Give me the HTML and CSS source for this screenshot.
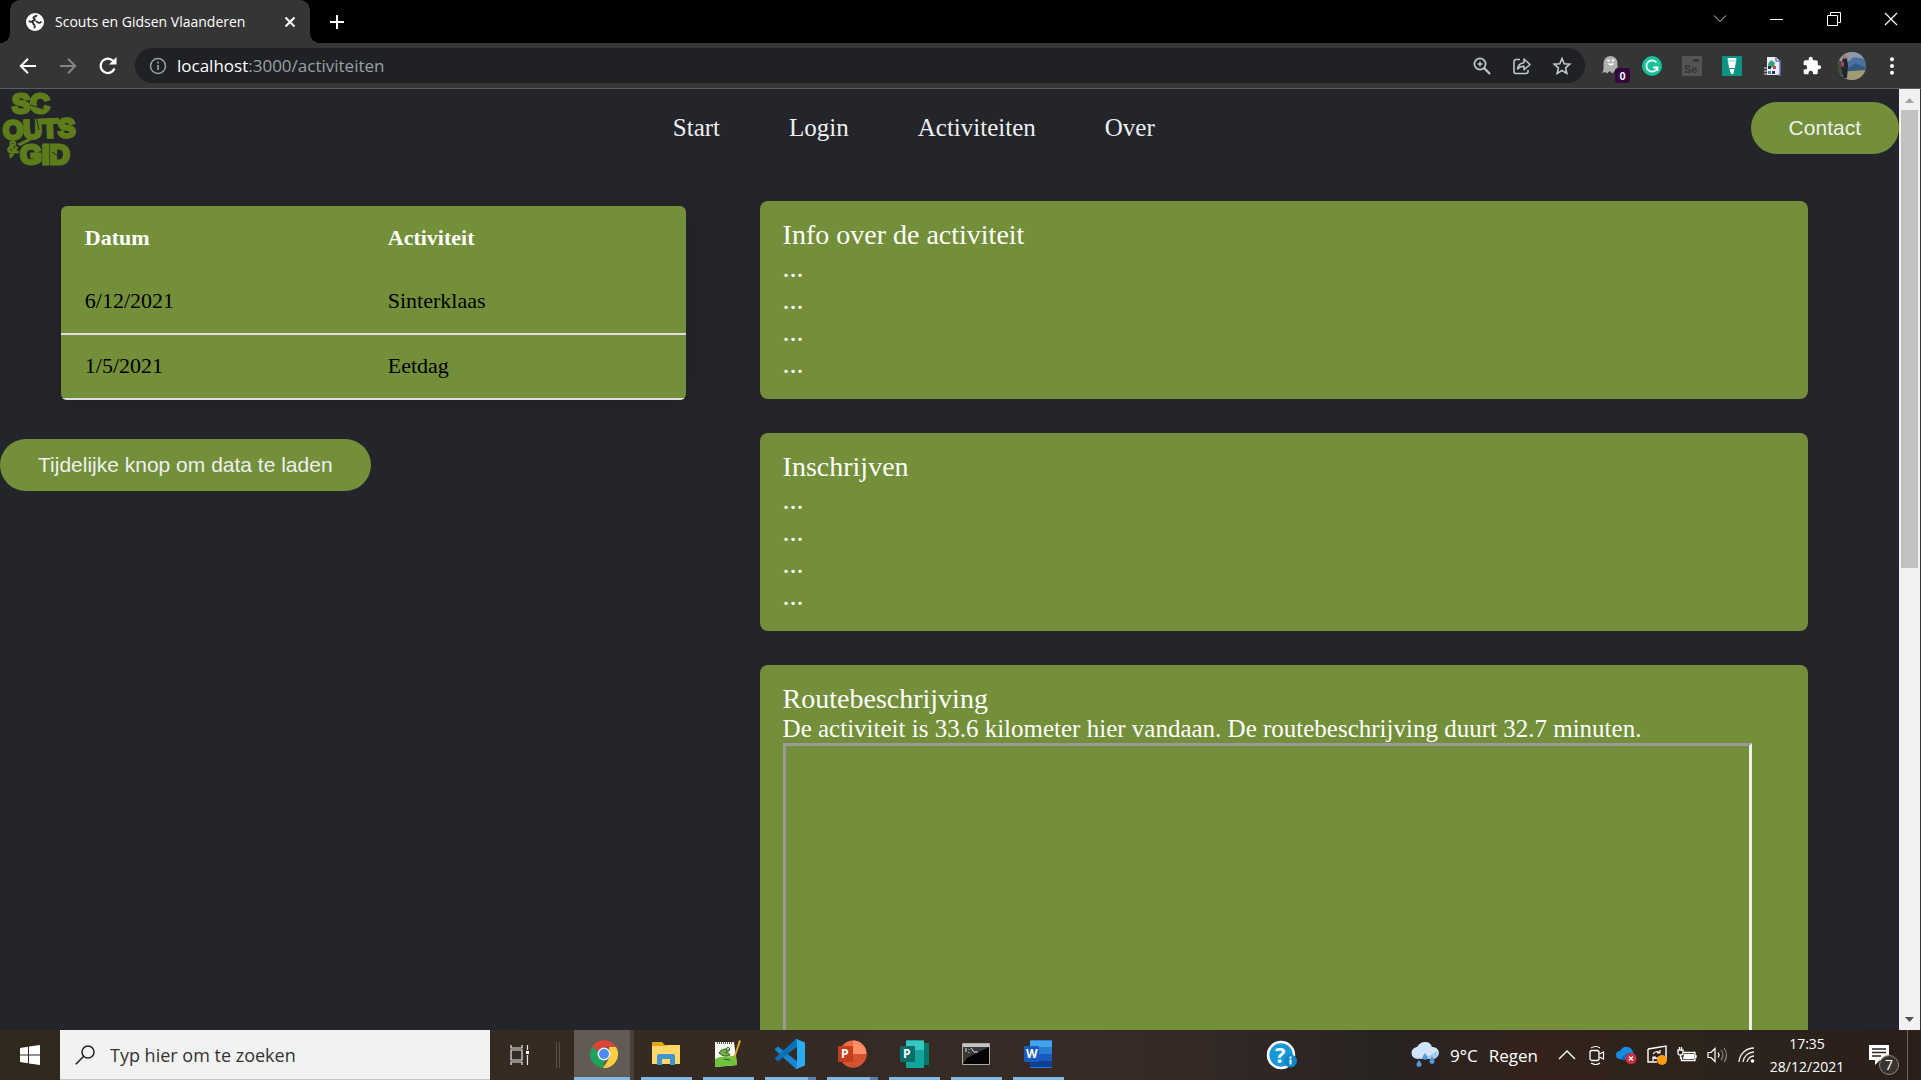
FILE: index.html
```html
<!DOCTYPE html>
<html lang="nl">
<head>
<meta charset="utf-8">
<meta name="viewport" content="width=device-width, initial-scale=1">
<title>Scouts en Gidsen Vlaanderen</title>
<link rel="stylesheet" href="styles.css">
</head>
<body>
<div class="tabstrip">
  <div class="tab">
    <svg class="favicon" viewBox="0 0 18 18" width="18" height="18"><circle cx="9" cy="9" r="9" fill="#fff"/><path d="M11 2.200c-.6 1.600-3 1-3.600 2.600-.3 1.200 1.500.8 1.600 1.800.1 1-1.600 1.400-3 1.400M2.600 8.600c2.400-.2 4.400 0 4.600 1.800.1 1.300 1.500 1 1.500 2.300l-.2 2.600M15.500 8.500c-.8 1.200-1.700 1.600-2.800 1.300-1.300-.4-1.500-1.400-3-1.400" fill="none" stroke="#353535" stroke-width="1.900"/></svg>
    <span class="tab-title">Scouts en Gidsen Vlaanderen</span>
    <button class="icon-button tab-close" aria-label="Tabblad sluiten"><svg viewBox="0 0 12 12" width="12" height="12"><path d="M1.500 1.500l9 9m0-9l-9 9" stroke="#fff" stroke-width="2"/></svg></button>
  </div>
  <button class="icon-button new-tab" aria-label="Nieuw tabblad"><svg viewBox="0 0 16 16" width="16" height="16"><path d="M8 1v14M1 8h14" stroke="#fff" stroke-width="2"/></svg></button>
  <div class="window-controls">
    <button class="icon-button" aria-label="Tabbladen zoeken"><svg viewBox="0 0 14 14" width="14" height="14"><path d="M1 3.500l6 6 6-6" fill="none" stroke="#ddd"/></svg></button>
    <button class="icon-button" aria-label="Minimaliseren"><svg viewBox="0 0 14 14" width="14" height="14"><path d="M0 7.500h13" stroke="#fff"/></svg></button>
    <button class="icon-button" aria-label="Vorig formaat"><svg viewBox="0 0 14 14" width="14" height="14"><path d="M.5 3.500h10v10H.500zM3.500 3V.500h10v10H11" fill="none" stroke="#fff"/></svg></button>
    <button class="icon-button" aria-label="Sluiten"><svg viewBox="0 0 14 14" width="14" height="14"><path d="M1 1l12 12M13 1L1 13" stroke="#fff" stroke-width="1.200"/></svg></button>
  </div>
</div>

<div class="toolbar">
  <button class="icon-button tool" aria-label="Terug"><svg viewBox="0 0 18 18" width="18" height="18"><path d="M17 9H2M9 1.800L1.800 9 9 16.200" fill="none" stroke="#fff" stroke-width="2"/></svg></button>
  <button class="icon-button tool" aria-label="Vooruit"><svg viewBox="0 0 18 18" width="18" height="18"><path d="M1 9h15M9 1.800L16.200 9 9 16.200" fill="none" stroke="#858585" stroke-width="2"/></svg></button>
  <button class="icon-button tool" aria-label="Vernieuwen"><svg viewBox="0 0 18 18" width="18" height="18"><path d="M15.500 11.500A7.200 7.200 0 1 1 14 3.800" fill="none" stroke="#fff" stroke-width="2.200"/><path d="M17.500 0v7.500H10z" fill="#fff"/></svg></button>
  <div class="omnibox">
    <svg viewBox="0 0 18 18" width="18" height="18"><circle cx="9" cy="9" r="7.500" fill="none" stroke="#9aa0a6" stroke-width="1.500"/><path d="M9 8v5M9 4.800v1.700" stroke="#9aa0a6" stroke-width="1.700"/></svg>
    <div class="address" role="textbox" aria-label="Adres"><span class="host">localhost</span>:3000/activiteiten</div>
    <button class="icon-button tool" aria-label="Zoomen"><svg viewBox="0 0 18 18" width="18" height="18"><circle cx="7" cy="7" r="5.600" fill="none" stroke="#c4c7c9" stroke-width="1.700"/><path d="M11 11l6 6" stroke="#c4c7c9" stroke-width="2.200"/><path d="M7 4.500v5M4.500 7h5" stroke="#c4c7c9" stroke-width="1.400"/></svg></button>
    <button class="icon-button tool" aria-label="Delen"><svg viewBox="0 0 18 18" width="18" height="18"><path d="M7 2.500H3a2 2 0 0 0-2 2v10a2 2 0 0 0 2 2h10a2 2 0 0 0 2-2V13" fill="none" stroke="#c4c7c9" stroke-width="1.600"/><path d="M4.500 12C5 8 7.500 6 11 5.700V2l6 5.500-6 5.200V9.200C8 9.200 6 10 4.500 12z" fill="none" stroke="#c4c7c9" stroke-width="1.500" stroke-linejoin="round"/></svg></button>
    <button class="icon-button tool" aria-label="Bladwijzer"><svg viewBox="0 0 18 18" width="18" height="18"><path d="M9 1.500l2.200 5.200 5.600.5-4.200 3.700 1.200 5.500L9 13.500l-4.800 2.900 1.200-5.500L1.200 7.200l5.600-.5z" fill="none" stroke="#c4c7c9" stroke-width="1.600"/></svg></button>
  </div>
  <div class="extensions">
    <button class="icon-button tool" aria-label="Ghostery"><svg viewBox="0 0 28 28" width="28" height="28"><path d="M4 21c2-3 1.500-6 1.500-10a7 7 0 0 1 14 0v9l-2.500-1.500-2.500 3-3-2.500-2.500 2.500-2-1.500z" fill="#b0b0b0"/><circle cx="10.500" cy="8.500" r="1.300" fill="#fff"/><circle cx="15" cy="8.500" r="1.300" fill="#fff"/><path d="M9.500 11.500h7q-3.500 4-7 0z" fill="#fff"/></svg><span class="ext-badge">0</span></button>
    <button class="icon-button tool" aria-label="Grammarly"><svg viewBox="0 0 20 20" width="20" height="20"><circle cx="10" cy="10" r="10" fill="#15c39a"/><path d="M14.500 6.500A5.600 5.600 0 1 0 15.300 12M11 11.500h4.500V15" fill="none" stroke="#fff" stroke-width="1.800"/></svg></button>
    <button class="icon-button tool" aria-label="Selenium"><svg viewBox="0 0 20 20" width="20" height="20"><path d="M0 0h20v20H0z" fill="#545454"/><path d="M11 3h6v3h-6z" fill="#383838"/><text x="2" y="17" font-family="Liberation Sans" font-weight="bold" font-size="11" fill="#353535">Se</text></svg></button>
    <button class="icon-button tool" aria-label="Markeren"><svg viewBox="0 0 20 20" width="20" height="20"><path d="M0 0h20v20H0z" fill="#0c9384"/><path d="M5.500 2h9l-1.600 10h-5.800zM7.500 13h5l-1.300 5h-2z" fill="#fff"/><path d="M5.500 5h9" stroke="#9cc"/></svg></button>
    <button class="icon-button tool" aria-label="Rapport"><svg viewBox="0 0 20 20" width="20" height="20"><path d="M5 1h9l4 4v14H5z" fill="#e9eefa"/><path d="M14 1v4h4v14h-2" fill="none" stroke="#6b78b8" stroke-width="1.500"/><path d="M6 8l3-4 4 3-1 4-5 1z" fill="#359b72"/><path d="M2 12h3M2 15h3M2 18h3" stroke="#ddd"/><path d="M6 10h3v3H6zM10 15h3v3h-3z" fill="#24345d"/><path d="M11 10h3v3h-3z" fill="#c64848"/><path d="M6 15h3v3H6z" fill="#5577bd"/></svg></button>
    <button class="icon-button tool" aria-label="Extensies"><svg viewBox="0 0 24 24" width="20" height="20"><path d="M20.500 11H19V7a2 2 0 0 0-2-2h-4V3.500a2.500 2.500 0 0 0-5 0V5H4a2 2 0 0 0-2 2v3.800h1.500a2.700 2.700 0 0 1 0 5.400H2V20a2 2 0 0 0 2 2h3.800v-1.500a2.700 2.700 0 0 1 5.400 0V22H17a2 2 0 0 0 2-2v-4h1.500a2.500 2.500 0 0 0 0-5z" fill="#fff"/></svg></button>
    <button class="icon-button tool" aria-label="Profiel"><svg viewBox="0 0 28 28" width="28" height="28"><clipPath id="avatar"><circle cx="14" cy="14" r="14"/></clipPath><g clip-path="url(#avatar)"><path d="M0 0h28v28H0z" fill="#49729c"/><path d="M0 0h28v7L16 5 8 11 0 13z" fill="#8f9aa6"/><path d="M10 16l8-5 10 5v5H10z" fill="#345a83"/><path d="M0 20l28-2v10H0z" fill="#a39a74"/><path d="M0 8l5 2v13H0z" fill="#3d4f38"/><path d="M5 6h4l1 8-1 12H5L3 13z" fill="#20242c"/><circle cx="7" cy="5" r="2" fill="#a47962"/><path d="M3 9l3 1v5l-3-1z" fill="#a5445d"/></g></svg></button>
    <button class="icon-button tool" aria-label="Menu"><svg viewBox="0 0 6 18" width="6" height="18"><g fill="#fff"><circle cx="3" cy="2.200" r="2"/><circle cx="3" cy="9" r="2"/><circle cx="3" cy="15.800" r="2"/></g></svg></button>
  </div>
</div>

<div class="viewport">
  <div class="page">
    <header class="header">
      <a href="#start" class="logo" aria-label="Scouts en Gidsen"><svg viewBox="0 0 77 78" width="77" height="78"><g font-family="Liberation Sans" font-weight="bold" fill="#5d7d1b" stroke="#5d7d1b" stroke-width="3"><text x="12" y="24" font-size="27">SC</text><text x="3" y="49" font-size="26" transform="rotate(-2 38 40)">OUTS</text><text x="20" y="75" font-size="28">GID</text><text x="7" y="64" font-size="16" stroke-width="1">&amp;</text></g><path d="M9 65l6-1-2 3-3 3zM17 55l10-5 8-1-7 4-8 4z" fill="#5d7d1b"/><path d="M30 16l14 4M36 27l3 14M52 63l8 5" stroke="#24252a"/></svg></a>
      <nav class="nav">
        <a href="#start">Start</a>
        <a href="#login">Login</a>
        <a href="#activiteiten">Activiteiten</a>
        <a href="#over">Over</a>
      </nav>
      <button class="pill">Contact</button>
    </header>
    <main class="content">
      <section class="agenda">
        <table class="activities">
          <thead><tr><th scope="col">Datum</th><th scope="col">Activiteit</th></tr></thead>
          <tbody>
            <tr><td>6/12/2021</td><td>Sinterklaas</td></tr>
            <tr><td>1/5/2021</td><td>Eetdag</td></tr>
          </tbody>
        </table>
        <button class="pill">Tijdelijke knop om data te laden</button>
      </section>
      <section class="details">
        <article class="card">
          <h2>Info over de activiteit</h2>
          <div class="lines"><p>...</p><p>...</p><p>...</p><p>...</p></div>
        </article>
        <article class="card">
          <h2>Inschrijven</h2>
          <div class="lines"><p>...</p><p>...</p><p>...</p><p>...</p></div>
        </article>
        <article class="card">
          <h2>Routebeschrijving</h2>
          <p class="route">De activiteit is 33.6 kilometer hier vandaan. De routebeschrijving duurt 32.7 minuten.</p>
          <div class="map"></div>
        </article>
      </section>
    </main>
  </div>
  <div class="scrollbar">
    <svg viewBox="0 0 21 21" width="21" height="21"><path d="M6 14l4.500-5 4.500 5z" fill="#a3a3a3"/></svg>
    <div class="track"><div class="thumb"></div></div>
    <svg viewBox="0 0 21 21" width="21" height="21"><path d="M6 8l4.500 5L15 8z" fill="#505050"/></svg>
  </div>
</div>

<footer class="taskbar">
  <button class="icon-button start" aria-label="Start"><svg viewBox="0 0 20 20" width="20" height="20"><path d="M0 3l8-1.200v7.700H0zM9 1.600L20 0v9.500H9zM0 10.500h8v7.700L0 17zM9 10.500h11V20L9 18.400z" fill="#fff"/></svg></button>
  <label class="search">
    <svg viewBox="0 0 20 20" width="20" height="20"><circle cx="13" cy="7" r="6" fill="none" stroke="#222" stroke-width="1.500"/><path d="M8.700 11.300L.8 19.200" stroke="#222" stroke-width="1.600"/></svg>
    <input type="text" placeholder="Typ hier om te zoeken" aria-label="Typ hier om te zoeken">
  </label>
  <button class="icon-button task-view" aria-label="Taakweergave"><svg viewBox="0 0 20 20" width="20" height="20"><path d="M1 5h11v10H1zM1 0v3h11V0M1 20v-3h11v3M17.500 0v5M17.500 10v10" fill="none" stroke="#e8e8e8" stroke-width="1.200"/><path d="M16 6h3v3h-3z" fill="#fff"/></svg></button>
  <div class="divider"></div>
  <div class="apps">
    <button class="app active" aria-label="Chrome"><svg viewBox="0 0 28 28" width="28" height="28"><path d="M14 14L14 28A14 14 0 0 1 1.900 7z" fill="#1da15c"/><path d="M26.100 7A14 14 0 0 1 13 28l7-11-1-10z" fill="#ffcd40"/><path d="M14 14L1.900 7A14 14 0 0 1 26.100 7H14z" fill="#db4437"/><circle cx="14" cy="14" r="6.500" fill="#f1f1f1"/><circle cx="14" cy="14" r="5" fill="#4c8bf5"/></svg></button>
    <button class="app" aria-label="Verkenner"><svg viewBox="0 0 28 28" width="28" height="28"><path d="M0 2h10l3 3h15v19H0z" fill="#e3a51a"/><path d="M0 6h14l2-1h12v19H0z" fill="#ffd867"/><path d="M5 25V16a2 2 0 0 1 2-2h14a2 2 0 0 1 2 2v9h-5v-6h-8v6z" fill="#3f94cf"/></svg></button>
    <button class="app" aria-label="Notepad++"><svg viewBox="0 0 28 28" width="28" height="28"><path d="M1 2h19l3 23-22 2z" fill="#f5f8ee"/><path d="M1 19c7-4 14-1 21-4l1 10-22 2z" fill="#70c43b"/><path d="M3 3h16" stroke="#555" stroke-dasharray="1 1" stroke-width="2"/><path d="M5 13c2-4 7-5 11-3-2 2-5 1-4 3 2-1 3 0 4 2-4 2-8 1-11-2zM10 19l6 1" fill="#70b13c" stroke="#31562a"/><circle cx="14" cy="9" r="1.500" fill="#eef5df" stroke="#31562a"/><path d="M27 1l-6 17-2 2 1-4L25 0z" fill="#d7a52b"/></svg></button>
    <button class="app split" aria-label="Visual Studio Code"><svg viewBox="0 0 30 30" width="30" height="30"><path d="M0 10l3-2.500L23 23v7h-2L0 11z" fill="#1787cf"/><path d="M0 20l3 2.500L23 7V0h-2L0 19z" fill="#0b70b8"/><path d="M21 0l8 3q1 .5 1 1.500v21q0 1-1 1.500l-8 3 1-3V3z" fill="#2bacf0"/></svg></button>
    <button class="app split" aria-label="PowerPoint"><svg viewBox="0 0 28 28" width="28" height="28"><circle cx="15" cy="14" r="13.500" fill="#ed6c47"/><path d="M15 .5A13.500 13.500 0 0 1 28.500 14H15z" fill="#ff8f6b"/><path d="M1.500 14h27A13.500 13.500 0 0 1 1.500 14z" fill="#d35230"/><rect y="6" width="15" height="16" rx="1" fill="#c43e1c"/><text x="3" y="18" font-family="Open Sans" font-weight="bold" font-size="12" fill="#fff">P</text></svg></button>
    <button class="app" aria-label="Publisher"><svg viewBox="0 0 28 28" width="28" height="28"><rect x="20" y="3" width="9" height="22" fill="#077568"/><rect x="6" width="18" height="28" rx="1" fill="#12a59b"/><path d="M6 1h18v9H6z" fill="#37c6be"/><rect y="6" width="15" height="16" rx="1" fill="#086e6c"/><text x="3" y="18" font-family="Open Sans" font-weight="bold" font-size="12" fill="#fff">P</text></svg></button>
    <button class="app" aria-label="Opdrachtprompt"><svg viewBox="0 0 28 28" width="28" height="28"><path d="M.5 3.500h27v21H.500z" fill="#050505" stroke="#aaa"/><path d="M1 4h26v3H1z" fill="#c4c4c4"/><path d="M1 7h26L5 18l-4 6z" fill="#393939"/><path d="M4 8v4M7 9v1m0 2v1M9 8l3 4h4" fill="none" stroke="#ddd"/></svg></button>
    <button class="app" aria-label="Word"><svg viewBox="0 0 28 28" width="28" height="28"><rect x="6" width="22" height="28" rx="1" fill="#2b7cd3"/><path d="M6 1h22v6H6z" fill="#41a5ee"/><path d="M6 14h22v7H6z" fill="#185abd"/><path d="M6 21h22v6H6z" fill="#103f91"/><rect y="6" width="15" height="16" rx="1" fill="#185abd"/><text x="2" y="18" font-family="Open Sans" font-weight="bold" font-size="12" fill="#fff">W</text></svg></button>
  </div>
  <button class="icon-button help" aria-label="Help"><svg viewBox="0 0 30 28" width="30" height="28"><circle cx="14" cy="14" r="13" fill="#1598d5" stroke="#fff" stroke-width="2.500"/><text x="8" y="22" font-family="Open Sans" font-weight="bold" font-size="22" fill="#fff">?</text><circle cx="23.500" cy="20" r="6.500" fill="#0e86c8"/><path d="M23.500 18.500v5M23.500 15.500v2" stroke="#fff" stroke-width="2"/></svg></button>
  <button class="weather"><svg viewBox="0 0 28 26" width="28" height="26"><path d="M7 17a6 6 0 0 1-1-12C8 2 10 0 14 0c4 0 6 2 7 5 9 0 9 11 1 12z" fill="#cfe5fa"/><path d="M4 15c7 2 14 0 22-6 1 5-1 8-4 8H7z" fill="#9ec8ee"/><path d="M8 18q5 6 0 7-5-1 0-7zM14 11q5 6 0 7-5-1 0-7zM21 14q5 7 0 8-5-1 0-8z" fill="#579bd6"/></svg><span>9°C</span><span>Regen</span></button>
  <div class="tray">
    <button class="icon-button" aria-label="Verborgen pictogrammen"><svg viewBox="0 0 18 18" width="18" height="18"><path d="M1 13l8-8 8 8" fill="none" stroke="#fff" stroke-width="1.400"/></svg></button>
    <button class="icon-button" aria-label="Nu vergaderen"><svg viewBox="0 0 18 18" width="18" height="18"><rect x="2" y="4.500" width="9" height="10" rx="2" fill="none" stroke="#fff" stroke-width="1.300"/><path d="M11.500 8l4-2v7l-4-2M3 2q5-3 9 0M3 17q5 3 9 0" fill="none" stroke="#fff" stroke-width="1.200"/></svg></button>
    <button class="icon-button" aria-label="OneDrive"><svg viewBox="0 0 22 18" width="22" height="18"><path d="M4 13a4 4 0 0 1 0-8c2-5 9-6 12-1l2 4-6 6z" fill="#168ce2"/><path d="M7 10q5-4 11-3l1 7H4z" fill="#0767bd"/><circle cx="15" cy="12.500" r="5.500" fill="#d32c3c"/><path d="M13 10.500l4 4m0-4l-4 4" stroke="#fff" stroke-width="1.300"/></svg></button>
    <button class="icon-button" aria-label="Windows Update"><svg viewBox="0 0 22 22" width="22" height="22"><path d="M2 5l18-3v14M2 5v13h9" fill="none" stroke="#fff" stroke-width="1.400"/><path d="M7 10q3-4 7-1m0-3v3h-3M13 13q-3 3-6 0m0 4v-4h3" fill="none" stroke="#fff" stroke-width="1.200"/><circle cx="16" cy="16" r="5" fill="#ff9e0c"/></svg></button>
    <button class="icon-button" aria-label="Batterij"><svg viewBox="0 0 20 16" width="20" height="16"><path d="M6 5.500h12v8H4.500V10M19 8v3M1 3h5v3q0 2-2.500 2T1 6zM2.500 3V0M4.500 3V0M3.500 8v4" fill="none" stroke="#fff" stroke-width="1.300"/><path d="M7 7h10v5H6z" fill="#fff"/></svg></button>
    <button class="icon-button" aria-label="Volume"><svg viewBox="0 0 20 18" width="20" height="18"><path d="M1 6.500h3l4-4v13l-4-4H1zM11 6.500q2 2.500 0 5" fill="none" stroke="#fff" stroke-width="1.200"/><path d="M14 4q4 5 0 10M17 2q5 7 0 14" fill="none" stroke="#8b8580" stroke-width="1.200"/></svg></button>
    <button class="icon-button" aria-label="Netwerk"><svg viewBox="0 0 18 18" width="18" height="18"><path d="M1 16A15 15 0 0 1 16 2M5 16A11 11 0 0 1 16 6M9 16A7 7 0 0 1 16 10" fill="none" stroke="#eee" stroke-width="1.300"/><circle cx="14.500" cy="15" r="1.800" fill="#fff"/></svg></button>
  </div>
  <div class="clock"><time>17:35</time><time>28/12/2021</time></div>
  <button class="icon-button notices" aria-label="Meldingen"><svg viewBox="0 0 20 20" width="20" height="20"><path d="M0 0h20v15H11l-5 5v-5H0z" fill="#fff"/><path d="M3 4h14M3 7.500h14M3 11h9" stroke="#2c201b" stroke-width="1.300"/></svg><span class="notice-badge">7</span></button>
  <div class="desktop-edge"></div>
</footer>
</body>
</html>
```
FILE: styles.css
```css
* { box-sizing: border-box; }

body {
  margin: 0;
  height: 100vh;
  display: flex;
  flex-direction: column;
  overflow: hidden;
  background: #24252a;
  font-family: "Open Sans", "Noto Sans", sans-serif;
}

button {
  margin: 0;
  border: 0;
  padding: 0;
  font: inherit;
  color: inherit;
}

svg { display: block; flex: none; overflow: visible; }

.icon-button {
  display: flex;
  align-items: center;
  justify-content: center;
  flex: none;
  background: none;
}

/* Browser tab strip */
.tabstrip {
  display: flex;
  flex: none;
  height: 43px;
  padding-left: 10px;
  background: #000;
}

.tab {
  position: relative;
  display: flex;
  align-items: center;
  width: 300px;
  padding: 0 10px 0 16px;
  border-radius: 10px 10px 0 0;
  background: #353535;
  color: #fff;
}

.tab::before,
.tab::after {
  content: "";
  position: absolute;
  bottom: 0;
  width: 10px;
  height: 10px;
}

.tab::before { left: -10px; background: radial-gradient(circle at 0 0, #000 10px, #353535 10px); }
.tab::after { right: -10px; background: radial-gradient(circle at 100% 0, #000 10px, #353535 10px); }

.tab-title {
  flex: 1;
  margin-left: 11px;
  font-size: 14px;
  white-space: nowrap;
}

.tab-close { width: 20px; height: 20px; }
.new-tab { width: 34px; margin-left: 10px; }

.window-controls { display: flex; margin: 0 2px 6px auto; }
.window-controls .icon-button { width: 57px; }

/* Browser toolbar */
.toolbar {
  display: flex;
  flex: none;
  align-items: center;
  height: 46px;
  padding: 0 9px 0 8px;
  border-bottom: 1px solid #5c5d5e;
  background: #353535;
}

.tool { position: relative; width: 40px; height: 35px; }

.omnibox {
  display: flex;
  flex: 1;
  align-items: center;
  height: 35px;
  margin: 0 7px;
  padding: 0 3px 0 14px;
  border-radius: 18px;
  background: #202124;
}

.address {
  flex: 1;
  margin-left: 10px;
  color: #9aa0a6;
  font-size: 17px;
}

.host { color: #fff; }

.extensions { display: flex; }

.ext-badge {
  position: absolute;
  right: 2px;
  bottom: 0;
  width: 15px;
  height: 15px;
  border-radius: 3px;
  background: #34063b;
  color: #fff;
  font: bold 11px/16px "Liberation Sans", sans-serif;
}

/* Site */
.viewport {
  display: flex;
  flex: 1;
  min-height: 0;
  border-right: 1px solid #353535;
}

.page {
  flex: 1;
  overflow: hidden;
  font-family: "Liberation Serif", serif;
}

.header {
  display: flex;
  align-items: center;
  justify-content: space-between;
}

.nav { display: flex; gap: 69px; }

.nav a {
  color: #edf0f1;
  font-size: 25px;
  line-height: 28px;
  text-decoration: none;
}

.pill {
  height: 52px;
  padding: 0 38px;
  border-radius: 50px;
  background: #748f39;
  color: #edf0f1;
  font-family: "Liberation Sans", sans-serif;
  font-size: 21px;
}

.content { display: grid; grid-template-columns: 2fr 3fr; }

.activities {
  width: 625px;
  max-width: 92%;
  margin: 39px 0 39px 8%;
  border-collapse: collapse;
  border-radius: 6px;
  overflow: hidden;
  background: #748f39;
  box-shadow: 0 0 25px rgba(0, 0, 0, 0.15);
  font-size: 22px;
  line-height: 25px;
  text-align: left;
}

.activities th { padding: 19px 24px; }
.activities td { padding: 18px 24px 20px; }
.activities th:first-child { width: 303px; }
.activities th { color: #fff; line-height: 26px; }
.activities tbody tr { border-bottom: 2px solid #ddd; }

.details {
  display: flex;
  flex-direction: column;
  gap: 34px;
  width: 92%;
  margin-top: 34px;
}

.card {
  padding: 18px 23px;
  border-radius: 8px;
  background: #748f39;
  color: #fff;
  font-size: 25px;
}

.card h2 {
  margin: 0;
  font-size: 28px;
  font-weight: normal;
  line-height: 32px;
}

.card p { margin: 0; }
.lines { padding: 1px 0; font-size: 28px; line-height: 32px; }
.route { line-height: 28px; }

.map {
  max-width: 969px;
  height: 560px;
  border: 3px solid;
  border-color: #9a9a9a #eef5e6 #eef5e6 #9a9a9a;
}

.scrollbar {
  display: flex;
  flex-direction: column;
  width: 21px;
  background: #f1f1f1;
}

.track { flex: 1; padding: 0 2px; }
.thumb { height: 51%; background: #c1c1c1; }

/* Taskbar */
.taskbar {
  display: flex;
  flex: none;
  height: 50px;
  background: linear-gradient(90deg, #30271d, #352b22 30%, #362a26 60%, #282322 72%, #33221b 80%, #2b241c 90%, #2b1e1b);
  color: #fff;
}

.start { width: 60px; }

.search {
  display: flex;
  align-items: center;
  width: 430px;
  padding-left: 15px;
  border: 1px solid #c5c5c5;
  border-width: 0 0 1px;
  background: #f2f2f2;
}

.search input {
  flex: 1;
  min-width: 0;
  margin-left: 15px;
  border: 0;
  padding: 0;
  outline: 0;
  background: none;
  font: 18px "Open Sans", sans-serif;
}

.search input::placeholder { color: #333; opacity: 1; }

.task-view { width: 60px; }

.divider {
  width: 4px;
  height: 26px;
  margin: 12px 14px 0 6px;
  border: 1px solid #5b5148;
  border-width: 0 1px;
}

.apps { display: flex; gap: 11px; }

.app {
  display: flex;
  align-items: center;
  justify-content: center;
  width: 51px;
  padding-right: 2px;
  border-bottom: 3px solid #83b8e6;
  background: none;
}

.app.active {
  width: 56px;
  padding: 0 0 0 3px;
  background: #625a54;
  box-shadow: 4px 0 #4a403b;
}

.app.split { border-image: linear-gradient(90deg, #83b8e6 80%, #5b81a8 80%) 3; }

.help { width: 40px; margin-left: auto; }

.weather {
  display: flex;
  align-items: center;
  gap: 11px;
  margin-left: 109px;
  background: none;
  font-size: 17px;
}

.tray { display: flex; margin-left: 14px; }
.tray .icon-button { width: 30px; }

.clock {
  display: flex;
  flex-direction: column;
  align-items: center;
  width: 90px;
  padding-top: 2px;
  font-size: 14px;
  line-height: 23px;
}

.notices { position: relative; width: 55px; padding-right: 1px; }

.notice-badge {
  position: absolute;
  right: 8px;
  bottom: 5px;
  width: 20px;
  height: 20px;
  border: 1px solid #8d8782;
  border-radius: 50%;
  background: #3a322e;
  font-size: 14px;
  line-height: 18px;
}

.desktop-edge { width: 14px; border-left: 1px solid #70635c; }
```
